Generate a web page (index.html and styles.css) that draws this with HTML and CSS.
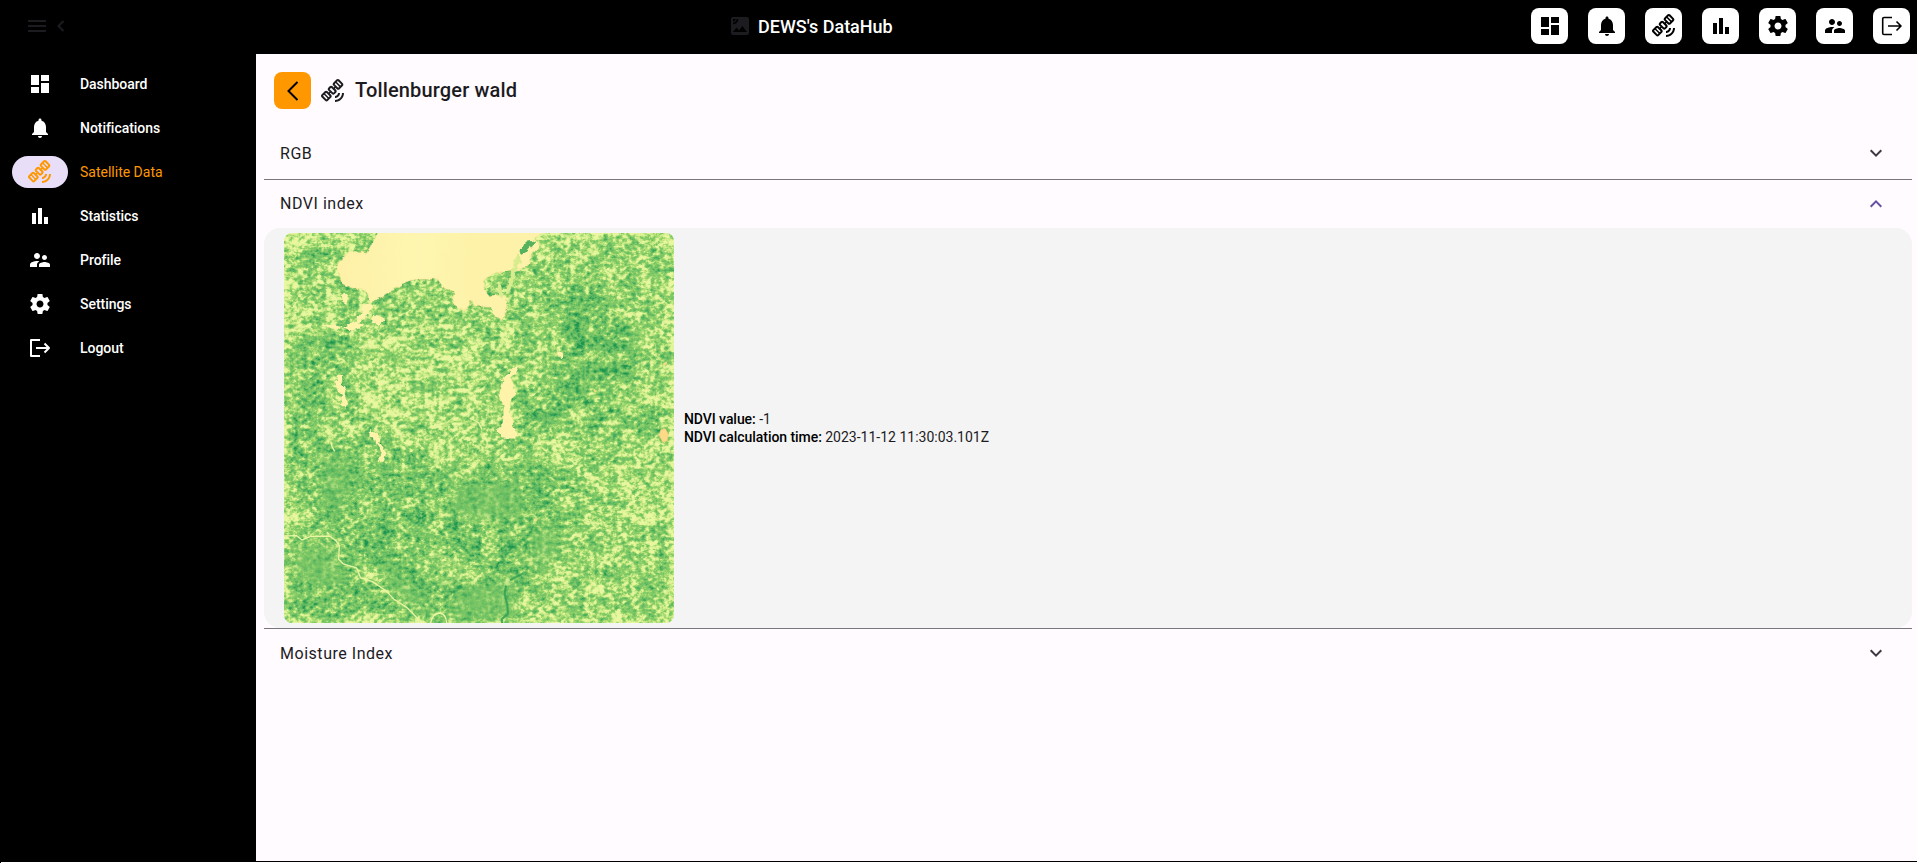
FILE: index.html
```html
<!DOCTYPE html>
<html lang="en">
<head>
<meta charset="utf-8">
<title>DEWS's DataHub</title>
<link rel="stylesheet" href="styles.css">
</head>
<body>
<svg class="defs" width="0" height="0">
  <symbol id="dashboard" viewBox="0 0 24 24"><path d="M3 13h8V3H3zM3 21h8v-6H3zM13 21h8V11h-8zM13 3v6h8V3z"/></symbol>
  <symbol id="bell" viewBox="0 0 24 24"><path d="M12 22c1.100 0 2-.9 2-2h-4c0 1.100.9 2 2 2zm6-6v-5c0-3.070-1.640-5.640-4.500-6.320V4c0-.83-.67-1.500-1.500-1.500s-1.500.67-1.500 1.500v.68C7.630 5.360 6 7.920 6 11v5l-2 2v1h16v-1z"/></symbol>
  <symbol id="satellite" viewBox="0 0 24 24"><path fill-rule="evenodd" d="M21 14h2c0 4.970-4.030 9-9 9v-2c3.870 0 7-3.130 7-7zM14 17v2c2.760 0 5-2.240 5-5h-2c0 1.660-1.340 3-3 3zM18.260.59l3.540 3.540c.78.78.78 2.050 0 2.830l-3.180 3.180c-.78.78-2.050.78-2.830 0L14.550 8.900l-.71.7 1.240 1.240c.78.78.78 2.050 0 2.830l-1.410 1.410c-.78.78-2.050.78-2.830 0L9.600 13.840l-.71.71 1.240 1.240c.78.78.78 2.050 0 2.830L6.950 21.800c-.78.78-2.050.78-2.830 0L.58 18.260c-.78-.78-.78-2.050 0-2.830l3.180-3.180c.78-.78 2.050-.78 2.830 0l1.240 1.240.71-.71L7.300 11.540c-.78-.78-.78-2.050 0-2.830L8.710 7.300c.78-.78 2.050-.78 2.830 0l1.240 1.240.71-.71-1.240-1.240c-.78-.78-.78-2.050 0-2.830L15.430.59c.78-.79 2.050-.79 2.830 0zM2 16.840l3.540 3.540 1.060-1.060-3.540-3.540zM4.120 14.720l3.540 3.540 1.060-1.060-3.540-3.540zM8.710 10.130l3.540 3.540 1.410-1.410-3.540-3.540zM13.660 5.170l3.540 3.540 1.060-1.060-3.540-3.540zM15.780 3.050l3.540 3.540 1.060-1.060-3.540-3.540z"/></symbol>
  <symbol id="bars" viewBox="0 0 24 24"><path d="M4 9h4v11H4zM16 13h4v7h-4zM10 4h4v16h-4z"/></symbol>
  <symbol id="people" viewBox="0 0 24 24"><path d="M16.500 12c1.380 0 2.490-1.120 2.490-2.500S17.880 7 16.500 7 14 8.120 14 9.500s1.120 2.500 2.500 2.500zM9 11c1.660 0 2.990-1.340 2.990-3S10.660 5 9 5 6 6.340 6 8s1.340 3 3 3zM16.500 14c-1.830 0-5.500.92-5.500 2.750V19h11v-2.250c0-1.830-3.670-2.750-5.500-2.750zM9 13c-2.330 0-7 1.170-7 3.500V19h7v-2.250c0-.85.33-2.340 2.370-3.470C10.500 13.100 9.660 13 9 13z"/></symbol>
  <symbol id="gear" viewBox="0 0 24 24"><path d="M19.430 12.980c.04-.32.07-.64.07-.98s-.03-.66-.07-.98l2.110-1.650c.19-.15.24-.42.12-.64l-2-3.460c-.12-.22-.39-.3-.61-.22l-2.490 1c-.52-.4-1.080-.73-1.690-.98l-.38-2.650C14.460 2.180 14.250 2 14 2h-4c-.25 0-.46.18-.49.42l-.38 2.650c-.61.25-1.170.59-1.690.98l-2.490-1c-.23-.09-.49 0-.61.22l-2 3.460c-.13.22-.07.49.12.64l2.110 1.650c-.04.32-.07.65-.07.98s.03.66.07.98l-2.110 1.650c-.19.15-.24.42-.12.64l2 3.460c.12.22.39.3.61.22l2.490-1c.52.4 1.080.73 1.690.98l.38 2.650c.03.24.24.42.49.42h4c.25 0 .46-.18.49-.42l.38-2.650c.61-.25 1.170-.59 1.690-.98l2.490 1c.23.09.49 0 .61-.22l2-3.460c.12-.22.07-.49-.12-.64zM12 15.500c-1.930 0-3.500-1.570-3.500-3.500s1.570-3.500 3.500-3.500 3.500 1.570 3.500 3.500-1.570 3.500-3.500 3.500z"/></symbol>
  <symbol id="logout" viewBox="0 0 24 24"><path fill="none" stroke="currentColor" stroke-width="2" stroke-linejoin="round" d="M12 4H3v16h9M8 12h13M16.500 7.500L21 12l-4.500 4.500"/></symbol>
  <symbol id="logout-thin" viewBox="0 0 24 24"><path fill="none" stroke="currentColor" stroke-width="1.600" stroke-linejoin="round" d="M12 3.500H4q-1.300 0-1.300 1.300v14.400q0 1.300 1.300 1.300h8M8 12h13M16.500 7.500L21 12l-4.500 4.500"/></symbol>
</svg>

<header class="topbar">
  <div class="top-left">
    <svg class="icon" viewBox="0 0 24 24"><path d="M3 18h18v-2H3zM3 13h18v-2H3zM3 6v2h18V6z"/></svg>
    <svg class="icon" viewBox="0 0 24 24"><path class="line" d="M14.500 7l-5 5 5 5"/></svg>
  </div>
  <div class="brand">
    <svg class="icon dim" viewBox="0 0 24 24"><path fill-rule="evenodd" d="M19 3H5c-1.100 0-2 .9-2 2v14c0 1.100.9 2 2 2h14c1.100 0 2-.9 2-2V5c0-1.100-.9-2-2-2zM5 5h2.570c0 1.420-1.150 2.580-2.570 2.580zM5 10.290V8.580C7 8.580 8.570 7 8.570 5h1.720c0 2.930-2.360 5.290-5.290 5.290zM5 18l3.500-4.500 2.500 3L14.500 12l4.500 6z"/></svg>
    <span>DEWS's DataHub</span>
  </div>
  <nav class="actions">
    <a class="action"><svg class="icon"><use href="#dashboard"/></svg></a>
    <a class="action"><svg class="icon"><use href="#bell"/></svg></a>
    <a class="action"><svg class="icon"><use href="#satellite"/></svg></a>
    <a class="action"><svg class="icon"><use href="#bars"/></svg></a>
    <a class="action"><svg class="icon"><use href="#gear"/></svg></a>
    <a class="action"><svg class="icon"><use href="#people"/></svg></a>
    <a class="action"><svg class="icon"><use href="#logout-thin"/></svg></a>
  </nav>
</header>

<div class="body">
  <nav class="sidebar">
    <a class="item"><span class="pill"><svg class="icon"><use href="#dashboard"/></svg></span>Dashboard</a>
    <a class="item"><span class="pill"><svg class="icon"><use href="#bell"/></svg></span>Notifications</a>
    <a class="item active"><span class="pill"><svg class="icon"><use href="#satellite"/></svg></span>Satellite Data</a>
    <a class="item"><span class="pill"><svg class="icon"><use href="#bars"/></svg></span>Statistics</a>
    <a class="item"><span class="pill"><svg class="icon"><use href="#people"/></svg></span>Profile</a>
    <a class="item"><span class="pill"><svg class="icon"><use href="#gear"/></svg></span>Settings</a>
    <a class="item"><span class="pill"><svg class="icon"><use href="#logout"/></svg></span>Logout</a>
  </nav>

  <main class="main">
    <div class="title-row">
      <a class="back"><svg class="icon" viewBox="0 0 24 24"><path class="line" d="M16.500 3L7.500 12l9 9"/></svg></a>
      <svg class="icon"><use href="#satellite"/></svg>
      <h1>Tollenburger wald</h1>
    </div>

    <section class="panel">
      <div class="panel-head"><span>RGB</span><svg class="icon" viewBox="0 0 24 24"><path class="line" d="M6.700 9.300L12 14.600l5.300-5.300"/></svg></div>
    </section>
    <section class="panel">
      <div class="panel-head open"><span>NDVI index</span><svg class="icon" viewBox="0 0 24 24"><path class="line" d="M6.700 14.700L12 9.400l5.300 5.300"/></svg></div>
      <div class="panel-body">
        <svg class="map" viewBox="42 39 1170 1170">
          <defs>
            <!-- grey level is mean vegetation density; noise is added, then mapped to the NDVI palette -->
            <filter id="ndvi" x="0" y="0" width="1" height="1" color-interpolation-filters="sRGB">
              <feGaussianBlur in="SourceGraphic" stdDeviation="22" result="mean"/>
              <feTurbulence type="fractalNoise" baseFrequency="0.071 0.083" numOctaves="3" seed="11"/>
              <feColorMatrix values="1.300 .9 0 0 -.6  1.300 .9 0 0 -.6  1.300 .9 0 0 -.6  0 0 0 0 1" result="fine"/>
              <feTurbulence type="fractalNoise" baseFrequency="0.019 0.023" numOctaves="3" seed="5"/>
              <feColorMatrix values="1 .8 0 0 -.4  1 .8 0 0 -.4  1 .8 0 0 -.4  0 0 0 0 1" result="patches"/>
              <feComposite in="fine" in2="patches" operator="arithmetic" k1="0" k2=".68" k3=".55" k4="-.115" result="noise"/>
              <feComposite in="noise" in2="mean" operator="arithmetic" k1="0" k2="1.150" k3="1" k4="-.58"/>
              <feComponentTransfer>
                <feFuncR type="table" tableValues=".91 .87 .72 .54 .47 .36 .25 .12"/>
                <feFuncG type="table" tableValues=".97 .95 .89 .81 .77 .72 .66 .59"/>
                <feFuncB type="table" tableValues=".63 .59 .48 .41 .4 .38 .35 .31"/>
                <feFuncA type="linear" slope="0" intercept="1"/>
              </feComponentTransfer>
            </filter>
            <filter id="rough" x="-.1" y="-.1" width="1.200" height="1.200" color-interpolation-filters="sRGB">
              <feTurbulence type="fractalNoise" baseFrequency="0.06" numOctaves="2" seed="3"/>
              <feDisplacementMap in="SourceGraphic" scale="16" xChannelSelector="R" yChannelSelector="G"/>
            </filter>
            <linearGradient id="lake" x1="0" x2="1"><stop offset="0" stop-color="#fef0a7"/><stop offset=".4" stop-color="#fef6b0"/><stop offset=".65" stop-color="#fdf2a8"/><stop offset="1" stop-color="#fef2aa"/></linearGradient>
            <filter id="soft" x="-.3" y="-.3" width="1.600" height="1.600"><feGaussianBlur stdDeviation="16"/></filter>
          </defs>
          <g filter="url(#ndvi)">
            <rect x="42" y="39" width="1170" height="1170" fill="#646464"/>
            <path fill="#808080" d="M42 230L160 300 250 340 210 480 150 640 200 850 42 800z"/>
            <path fill="#888" d="M42 960L190 960 280 1090 460 1209H42z"/>
            <path fill="#505050" d="M300 330L650 350 660 640 560 740 360 640 240 540z"/>
            <path fill="#858585" d="M42 690L330 660 560 780 700 700 850 730 880 920 820 1100 700 1209 460 1209 270 1000 42 890z"/>
            <path fill="#999" d="M870 200L1000 240 1090 330 1080 460 930 560 780 640 760 560 900 490 880 380 830 280zM770 730l60 20 10 120-70-10zM270 940l160 70 40 90 110 30-30 30-120-20-150-140z"/>
            <path fill="#858585" d="M940 580h272v50H940zM1160 60l52-20v160l-40 60z"/>
            <path fill="#525252" d="M1000 700l212-20v240H960zM850 990l80-10-20 100-90 129-50-20zM42 830l90 10 0 80-90 20z"/>
            <path fill="#4c4c4c" d="M42 160l80 70 30 80-110 50zM470 1010l80-10 30 60-50 40-60-30z"/>
          </g>
          <g fill="#74c365" opacity=".55" filter="url(#soft)">
            <path d="M560 800L740 790 760 890 640 900 540 880zM790 930l70-10 10 70-80 60zM160 700l90 30-40 140-50-10zM350 1020l120 130-40 20-90-110zM560 1110l180-30-20 110-170 10zM70 990l120-10 40 120-140-10z"/>
          </g>
          <g filter="url(#rough)">
            <path fill="url(#lake)" stroke="#fee29a" stroke-width="2" d="M332 30L312 60 290 100 240 92 204 132 202 150 216 190 246 206 280 205 294 222 298 248 340 228 402 188 430 178 502 177 516 202 532 210 554 210 548 246 566 268 588 268 606 238 620 258 662 262 672 284 694 296 708 280 714 242 710 226 684 224 660 228 642 208 640 182 664 164 728 148 740 156 766 142 780 130 784 96 806 86 806 66 790 60 818 30z"/>
            <path fill="#fef3a9" d="M744 440l-20 40 12 36-18 44 12 60 14 20-10 16-40-4-16-20 20-20 4-50-14-42 14-44 24-28zM206 464l-10 24 8 24 12 10-2 32 16 12 4-16-12-20 4-20-12-20 6-24zM280 250l30 4-20 36-26 20 20 4-38 18-40-14-46-4 0 6 50 6 30-14 24-12zM310 284l34 16-18 16-20-10zM300 630l32 20-4 20 22 30-8 24-16 2 10-34-22-32-16-10zM862 390l14 10 0 18-14-10zM220 222l14 0-4 30-14-8z"/>
            <path fill="#d8ec8e" d="M684 190l10 6 4 40-14-10zM730 140l10 10-20 64-12 6 8-40zM740 100l12 16-10 34-12-6z"/>
            <path fill="#55b25e" d="M788 62l8 4-32 34-14 6 4-26 14-14z"/>
          </g>
          <path fill="#feda88" stroke="#fcc878" stroke-width="2" d="M1172 630l14-4 8 16-2 20-14 4-10-20z"/>
          <path fill="#feda88" d="M1180 430l12-6-2 8-10 6zM790 895l12 4-4 6zM970 508l10 4-6 6z"/>
          <g fill="none" stroke="#eaf5a2" stroke-width="4">
            <path d="M42 948L80 947 96 960 120 950 178 948 198 962 208 978 206 1018 220 1032 260 1044 272 1074 306 1084 348 1112 372 1138 410 1162 456 1209M482 1209Q486 1182 508 1179 528 1180 530 1209M182 664l4 16 8 14M600 594l26 14 10 20"/>
          </g>
          <path fill="none" stroke="#2c9f55" stroke-width="6" stroke-linejoin="round" opacity=".8" d="M696 1209l0-12 18-16-2-26-8-34 4-24M720 1080l40-20"/>
          <path fill="none" stroke="#a8d97a" stroke-width="7" opacity=".55" d="M482 1012q60-20 90 40-10 34-60 40M500 1030l40 0"/>
        </svg>
        <div class="facts">
          <div><b>NDVI value:</b> -1</div>
          <div><b>NDVI calculation time:</b> 2023-11-12 11:30:03.101Z</div>
        </div>
      </div>
    </section>
    <section class="panel">
      <div class="panel-head"><span>Moisture Index</span><svg class="icon" viewBox="0 0 24 24"><path class="line" d="M6.700 9.300L12 14.600l5.300-5.300"/></svg></div>
    </section>
  </main>
</div>
<footer class="edge"></footer>
</body>
</html>
```

FILE: styles.css
```css
* { box-sizing: border-box; }
body {
  margin: 0;
  height: 863px;
  overflow: hidden;
  display: flex;
  flex-direction: column;
  background: #000;
  color: #1c1b1f;
  font-family: Roboto, sans-serif;
  font-size: 14px;
}
.defs { position: absolute; }
.icon { width: 24px; height: 24px; fill: currentColor; flex: none; display: block; }
.line { fill: none; stroke: currentColor; stroke-width: 2; }

.topbar {
  height: 54px;
  flex: none;
  display: grid;
  grid-template-columns: 728px auto 1fr;
  background: #000;
}
.top-left { display: flex; padding: 14px 0 0 25px; color: #1c1b1f; }
.brand {
  display: flex;
  gap: 6px;
  padding: 14px 0 0;
  color: #fff;
  font-size: 18px;
  font-weight: 500;
  line-height: 26px;
}
.dim { color: #1c1b1f; }
.actions { display: flex; justify-content: flex-end; gap: 20px; padding: 8px 7px 0 0; }
.action {
  width: 37px;
  height: 36px;
  display: grid;
  place-items: center;
  border-radius: 8px;
  background: #fff;
  color: #000;
}

.body { display: flex; height: 807px; }
.sidebar { width: 256px; padding: 8px 12px; display: flex; flex-direction: column; color: #fff; }
.item { display: flex; align-items: center; gap: 12px; height: 44px; font-weight: 500; letter-spacing: -.04px; }
.pill { width: 56px; height: 32px; border-radius: 16px; display: grid; place-items: center; }
.active { color: #ff9800; font-weight: 400; letter-spacing: 0; }
.active .pill { background: #e8def8; }

.main { flex: 1; background: #fffbfe; padding: 18px 5px 0 8px; }
.title-row { display: flex; align-items: center; height: 37px; padding-left: 10px; margin-bottom: 20px; }
.back {
  width: 37px;
  height: 37px;
  margin-right: 10px;
  display: grid;
  place-items: center;
  border-radius: 8px;
  background: #ff9800;
  color: #000;
}
h1 { margin: 0 0 2px 10px; font-size: 20px; font-weight: 500; line-height: 28px; letter-spacing: .15px; }

.panel { border-bottom: 1px solid #79747e; }
.panel:last-child { border-bottom: 0; }
.panel-head {
  height: 48px;
  padding: 0 24px 0 16px;
  display: flex;
  align-items: center;
  justify-content: space-between;
  font-size: 16px;
  letter-spacing: .53px;
}
.title-row + .panel { padding-bottom: 2px; }
.open span { padding-bottom: 1px; }
.panel-head .icon { color: #3c3942; }
.open .icon { color: #6750a4; }
.panel-body {
  height: 400px;
  padding: 5px 20px;
  display: flex;
  align-items: center;
  gap: 10px;
  border-radius: 16px;
  background: #f4f4f4;
}
.map { width: 390px; height: 390px; border-radius: 8px; display: block; }
.facts { color: #1c1b1f; line-height: 18px; }
.facts b { font-weight: 500; color: #000; letter-spacing: -.06px; }
.edge { height: 1px; margin: 1px 0 0 1px; background: #fff; }
```
